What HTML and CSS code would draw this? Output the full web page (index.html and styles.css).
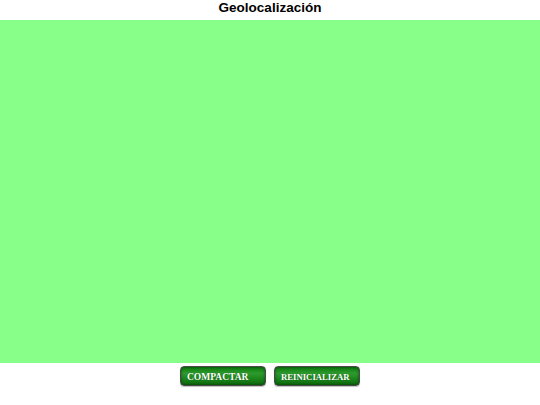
FILE: index.html
```html
<!DOCTYPE html>
<html>
<head>
<meta charset="utf-8">
<link rel="stylesheet" href="styles.css">
</head>
<body>
<div class="page">
  <h1 class="title">Geolocalización</h1>
  <div class="map"></div>
  <div class="actions">
    <button class="btn btn-compact">COMPACTAR</button>
    <button class="btn btn-reset">REINICIALIZAR</button>
  </div>
</div>
</body>
</html>
```
FILE: styles.css
```css
html, body {
  margin: 0;
  padding: 0;
  background: #ffffff;
}
.page {
  width: 540px;
  height: 405px;
  display: flex;
  flex-direction: column;
}
.title {
  margin: 0;
  height: 20px;
  font-family: "Liberation Sans", Arial, sans-serif;
  font-weight: bold;
  font-size: 13.5px;
  line-height: 16px;
  text-align: center;
  color: #000;
}
.map {
  height: 343px;
  background: #88ff88;
}
.actions {
  display: flex;
  justify-content: center;
  gap: 8px;
  padding-top: 3px;
}
.btn {
  box-sizing: border-box;
  height: 20px;
  padding: 1px 0 0 6px;
  text-align: left;
  border: 1px solid #4a4a4a;
  border-radius: 4px;
  background: linear-gradient(to bottom, #0b7a0b 0%, #2e9a2e 35%, #1f8a1f 60%, #0a6a0a 100%);
  box-shadow: inset 0 0 3px rgba(0,0,0,0.5), 0 1px 1px rgba(0,0,0,0.25);
  color: #ffffff;
  font-family: "Liberation Serif", "Times New Roman", serif;
  font-weight: bold;
  font-size: 9.5px;
  line-height: 16px;
  text-shadow: 0 0 1px rgba(0,0,0,0.4);
}
.btn-compact {
  width: 86px;
}
.btn-reset {
  width: 86px;
  font-size: 8.7px;
}
```
